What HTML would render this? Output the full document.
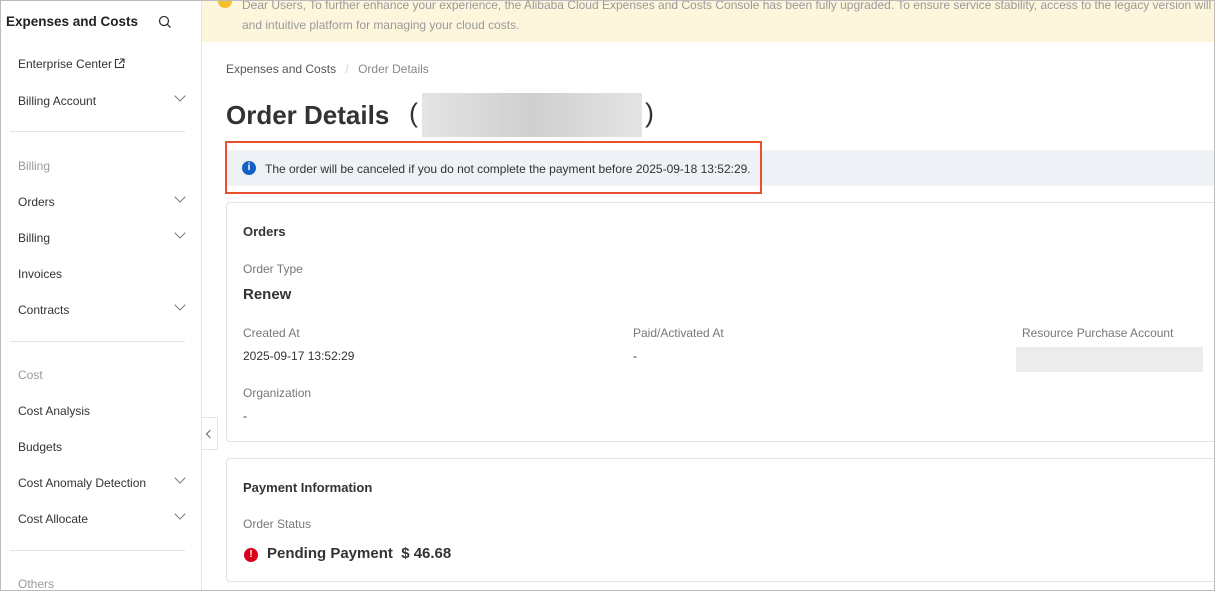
<!DOCTYPE html>
<html><head><style>
*{box-sizing:border-box;margin:0;padding:0}
body{width:1215px;height:591px;overflow:hidden;font-family:"Liberation Sans",sans-serif;color:#333;background:#fff;position:relative;font-size:12px}
.frame{position:absolute;inset:0;border:1px solid #bbb;pointer-events:none;z-index:10}
.side{position:absolute;left:0;top:0;width:202px;height:591px;border-right:1px solid #e5e5e5;background:#fff}
.side div{position:absolute;left:18px;font-size:12px;color:#333}
.side .g{color:#999}
.side .hr{left:10px;width:175px;height:1px;background:#e3e3e3}
.chev{position:absolute;left:176px;width:8px;height:8px;border-right:1.3px solid #777;border-bottom:1.3px solid #777;transform:rotate(45deg)}
.ban{position:absolute;left:202px;top:0;right:0;height:42px;background:#fdf6dd;color:#999;font-size:12px;line-height:20px;overflow:hidden}
.abs{position:absolute}
.card{position:absolute;left:226px;right:0;border:1px solid #e3e3e3;border-right:none;border-radius:4px 0 0 4px;background:#fff}
.lbl{position:absolute;color:#777;font-size:12px}
.val{position:absolute;color:#333;font-size:12px}
</style></head><body>
<div class="frame"></div>
<div class="side">
<div style="left:6px;top:14px;font-size:13.5px;font-weight:bold;color:#222">Expenses and Costs</div>
<svg class="abs" style="left:158px;top:15px" width="14" height="14" viewBox="0 0 14 14"><circle cx="6" cy="6" r="4.5" fill="none" stroke="#333" stroke-width="1.3"/><line x1="9.3" y1="9.3" x2="12.5" y2="12.5" stroke="#333" stroke-width="1.3"/></svg>
<div style="top:57px">Enterprise Center</div>
<svg class="abs" style="left:114px;top:58px" width="11" height="11" viewBox="0 0 11 11"><path d="M5 1.5H1.5v8h8V6M6 1h4v4M10 1L5 6" fill="none" stroke="#333" stroke-width="1.1"/></svg>
<div style="top:94px">Billing Account</div><span class="chev" style="top:92px"></span>
<div class="hr" style="top:131px"></div>
<div class="g" style="top:159px">Billing</div>
<div style="top:195px">Orders</div><span class="chev" style="top:193px"></span>
<div style="top:231px">Billing</div><span class="chev" style="top:229px"></span>
<div style="top:267px">Invoices</div>
<div style="top:303px">Contracts</div><span class="chev" style="top:301px"></span>
<div class="hr" style="top:341px"></div>
<div class="g" style="top:368px">Cost</div>
<div style="top:404px">Cost Analysis</div>
<div style="top:440px">Budgets</div>
<div style="top:476px">Cost Anomaly Detection</div><span class="chev" style="top:474px"></span>
<div style="top:512px">Cost Allocate</div><span class="chev" style="top:510px"></span>
<div class="hr" style="top:550px"></div>
<div class="g" style="top:577px">Others</div>
</div>
<div class="ban">
<div class="abs" style="left:16px;top:-6px;width:14px;height:14px;border-radius:50%;background:#f5c02a"></div>
<div class="abs" style="left:40px;top:-5px;white-space:nowrap">Dear Users, To further enhance your experience, the Alibaba Cloud Expenses and Costs Console has been fully upgraded. To ensure service stability, access to the legacy version will be gradually</div>
<div class="abs" style="left:40px;top:15px;white-space:nowrap">and intuitive platform for managing your cloud costs.</div>
</div>
<div class="abs" style="left:202px;top:417px;width:16px;height:33px;border:1px solid #e3e3e3;border-left:none;background:#fff"><span class="abs" style="left:5px;top:13px;width:6px;height:6px;border-left:1.2px solid #666;border-bottom:1.2px solid #666;transform:rotate(45deg)"></span></div>
<div class="abs" style="left:226px;top:62px;color:#555">Expenses and Costs <span style="color:#ccc;margin:0 6px">/</span> <span style="color:#888">Order Details</span></div>
<div class="abs" style="left:226px;top:100px;font-size:26px;font-weight:bold;color:#333">Order Details</div>
<div class="abs" style="left:409px;top:98px;font-size:27px;color:#333">(</div>
<div class="abs" style="left:422px;top:93px;width:220px;height:44px;background:linear-gradient(90deg,#e4e4e4,#cfcfcf 50%,#e4e4e4)"></div>
<div class="abs" style="left:645px;top:98px;font-size:27px;color:#333">)</div>
<div class="abs" style="left:227px;top:150px;right:0;height:36px;background:#eef1f6"></div>
<div class="abs" style="left:225px;top:141px;width:537px;height:53px;border:2px solid #e9512e"></div>
<div class="abs" style="left:242px;top:161px;width:14px;height:14px;border-radius:50%;background:#1360c7;color:#fff;font-size:10px;font-weight:bold;text-align:center;line-height:14px">i</div>
<div class="abs" style="left:265px;top:162px;color:#333">The order will be canceled if you do not complete the payment before 2025-09-18 13:52:29.</div>
<div class="card" style="top:202px;height:240px">
<div class="val" style="left:16px;top:21px;font-size:13px;font-weight:bold">Orders</div>
<div class="lbl" style="left:16px;top:59px">Order Type</div>
<div class="val" style="left:16px;top:83px;font-size:15px;font-weight:bold">Renew</div>
<div class="lbl" style="left:16px;top:123px">Created At</div>
<div class="val" style="left:16px;top:146px">2025-09-17 13:52:29</div>
<div class="lbl" style="left:406px;top:123px">Paid/Activated At</div>
<div class="val" style="left:406px;top:146px">-</div>
<div class="lbl" style="left:795px;top:123px">Resource Purchase Account</div>
<div class="abs" style="left:789px;top:144px;width:187px;height:25px;background:#ececec"></div>
<div class="lbl" style="left:16px;top:183px">Organization</div>
<div class="val" style="left:16px;top:206px">-</div>
</div>
<div class="card" style="top:458px;height:124px">
<div class="val" style="left:16px;top:21px;font-size:13px;font-weight:bold">Payment Information</div>
<div class="lbl" style="left:16px;top:58px">Order Status</div>
<div class="abs" style="left:17px;top:89px;width:14px;height:14px;border-radius:50%;background:#d9001b;color:#fff;font-size:10px;font-weight:bold;text-align:center;line-height:14px">!</div>
<div class="val" style="left:40px;top:86px;font-size:15px;font-weight:bold">Pending Payment&nbsp; $ 46.68</div>
</div>
</body></html>
